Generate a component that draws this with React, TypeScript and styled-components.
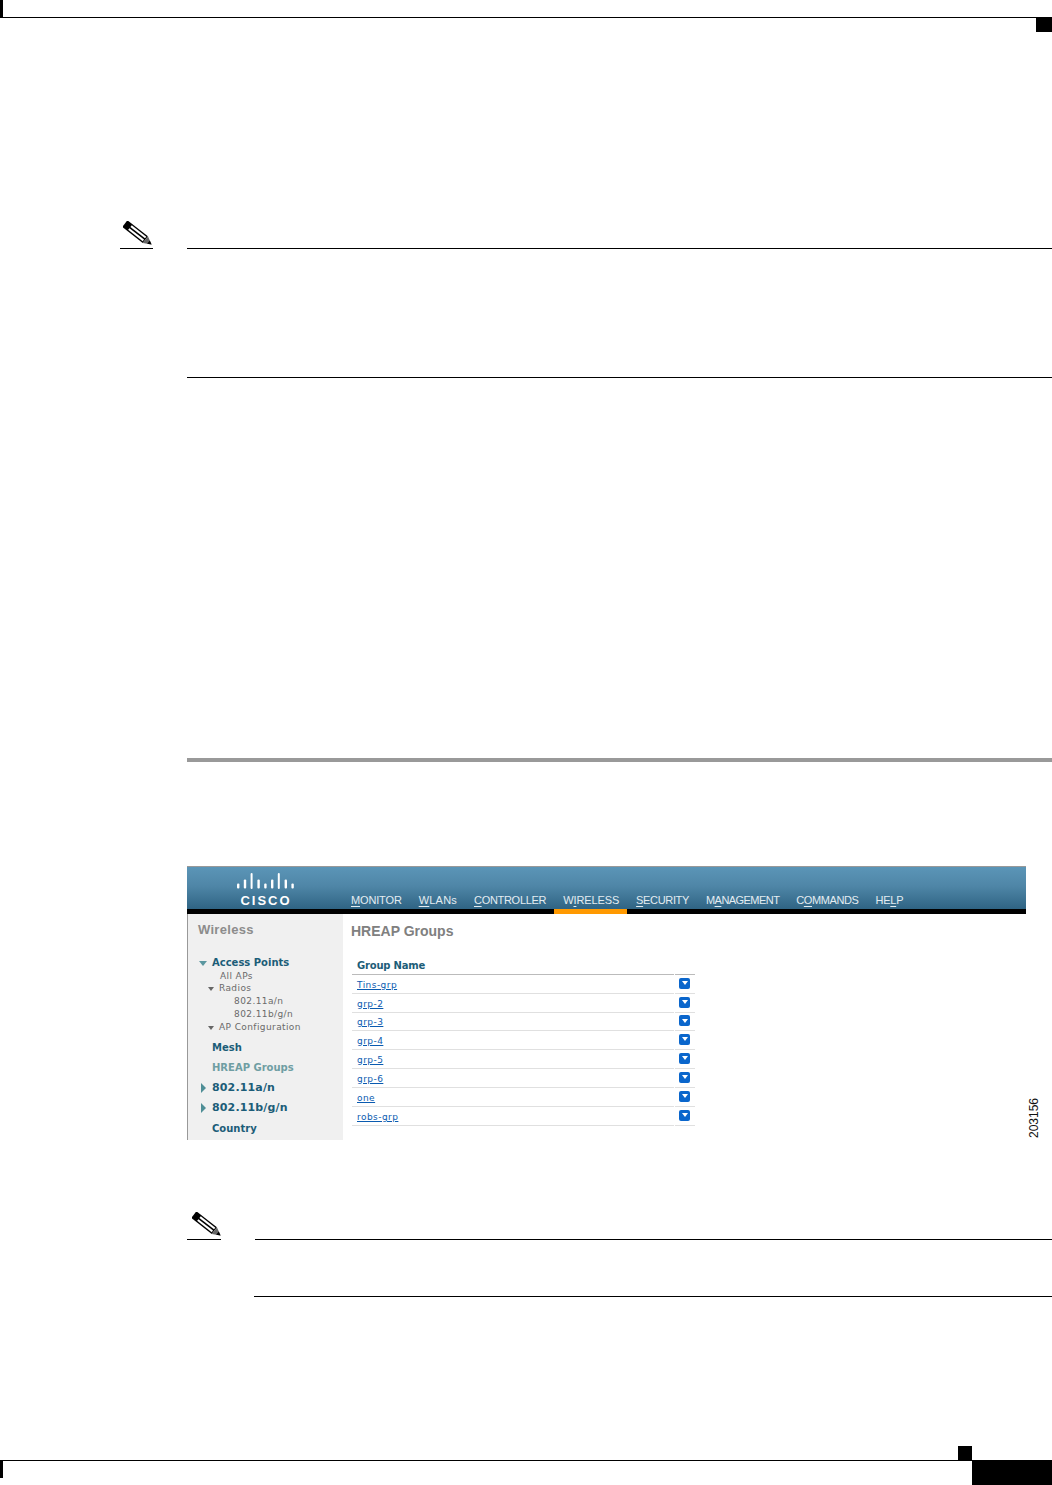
import React from "react";
import styled, { createGlobalStyle } from "styled-components";

const Global = createGlobalStyle`
  html, body { margin: 0; padding: 0; background: #fff; }
  body { font-family: "Liberation Sans", Arial, sans-serif; }
`;

const Page = styled.div`
  width: 1052px;
  height: 1485px;
  display: flex;
  flex-direction: column;
  overflow: hidden;
  background: #fff;
`;

const TopEdge = styled.header`
  display: flex;
  flex-direction: column;
`;
const TopTick = styled.div`
  width: 3px;
  height: 17px;
  background: #000;
`;
const TopRule = styled.div`
  height: 1px;
  background: #000;
`;
const CornerMark = styled.div`
  width: 16px;
  height: 14px;
  margin-left: auto;
  background: #000;
`;

const Note = styled.section<{ $left: number; $bodyLeft: number; $top: number; $body: number }>`
  margin: ${(p) => p.$top}px 0 0 ${(p) => p.$left}px;
  display: flex;
  flex-direction: column;
  & > div:last-child {
    height: ${(p) => p.$body - 1}px;
    margin-left: ${(p) => p.$bodyLeft}px;
  }
`;
const NoteHead = styled.div`
  display: flex;
  gap: 34px;
  height: 30px;
`;
const NoteIcon = styled.div<{ $width: number; $pad: number }>`
  width: ${(p) => p.$width}px;
  box-sizing: border-box;
  padding: 2px 0 0 ${(p) => p.$pad}px;
  border-bottom: 1px solid #000;
  svg { display: block; }
`;
const NoteLine = styled.div`
  flex: 1;
  border-bottom: 1px solid #000;
`;
const NoteBody = styled.div`
  border-bottom: 1px solid #000;
`;

const StepRule = styled.div`
  height: 4px;
  margin: 380px 0 0 187px;
  background: #999;
`;

const FigureRow = styled.div`
  display: flex;
  margin: 104px 0 0 187px;
  height: 274px;
`;
const Shot = styled.figure`
  width: 839px;
  margin: 0;
  display: flex;
  flex-direction: column;
  border-top: 1px solid #999;
  box-sizing: border-box;
`;
const FigureId = styled.div`
  align-self: flex-end;
  margin: 0 0 2px 3px;
  writing-mode: vertical-rl;
  transform: rotate(180deg);
  font-size: 12px;
  line-height: 11px;
  color: #111;
`;

const AppHeader = styled.div`
  height: 42px;
  display: flex;
  align-items: flex-end;
  background: linear-gradient(#5b95b7 0%, #4f86a7 45%, #2f6484 100%);
`;
const Logo = styled.div`
  width: 60px;
  margin: 0 56px 0 49px;
  height: 42px;
  display: flex;
  flex-direction: column;
  align-items: center;
  flex-shrink: 0;
  svg { display: block; margin-top: 6px; }
`;
const LogoWord = styled.span`
  margin-top: 5px;
  font-size: 13px;
  line-height: 12px;
  font-weight: 700;
  letter-spacing: 2px;
  color: #fff;
`;
const Nav = styled.nav`
  display: flex;
  gap: 17px;
  margin-left: -1px;
  padding-bottom: 2px;
`;
const NavItem = styled.span<{ $tight: number }>`
  font-size: 11px;
  line-height: 14px;
  letter-spacing: ${(p) => p.$tight}px;
  color: #e4edf2;
  white-space: nowrap;
  u { text-underline-offset: 2px; }
`;
const Band = styled.div`
  height: 5px;
  background: #000;
  display: flex;
`;
const ActiveTab = styled.div`
  width: 73px;
  margin-left: 367px;
  background: #f90;
`;
const AppBody = styled.div`
  flex: 1;
  display: flex;
  min-height: 0;
`;
const Sidebar = styled.aside`
  width: 155px;
  background: #f0f0f0;
  border-left: 1px solid #999;
  display: flex;
  flex-direction: column;
  padding-top: 6px;
`;
const SideTitle = styled.div`
  height: 20px;
  line-height: 20px;
  padding-left: 10px;
  margin-bottom: 16px;
  font-size: 13px;
  font-weight: 700;
  letter-spacing: 0.3px;
  color: #8c8c8c;
`;
const TreeRow = styled.div<{ $x: number; $top?: number }>`
  display: flex;
  align-items: center;
  padding-left: ${(p) => p.$x}px;
  margin-top: ${(p) => p.$top ?? 0}px;
  white-space: nowrap;
`;
const BoldLink = styled.span<{ $active?: boolean; $big?: boolean }>`
  font-family: "DejaVu Sans", sans-serif;
  font-weight: 700;
  font-size: ${(p) => (p.$big ? 11 : 10)}px;
  letter-spacing: ${(p) => (p.$big ? 0.15 : 0)}px;
  line-height: 14px;
  color: ${(p) => (p.$active ? "#6f9ea3" : "#1c5d78")};
`;
const SubLink = styled.span`
  font-family: "DejaVu Sans", sans-serif;
  font-size: 9px;
  letter-spacing: 0.4px;
  line-height: 13px;
  color: #6a6a6a;
`;
const TriDown = styled.span<{ $small?: boolean }>`
  width: 0;
  height: 0;
  border-left: ${(p) => (p.$small ? 3.5 : 4.5)}px solid transparent;
  border-right: ${(p) => (p.$small ? 3.5 : 4.5)}px solid transparent;
  border-top: ${(p) => (p.$small ? 4 : 5)}px solid ${(p) => (p.$small ? "#666" : "#5b97a0")};
  margin-right: 5px;
`;
const TriRight = styled.span`
  width: 0;
  height: 0;
  border-top: 5px solid transparent;
  border-bottom: 5px solid transparent;
  border-left: 5px solid #4f8e96;
  margin-right: 6px;
`;

const Main = styled.main`
  flex: 1;
  padding: 6px 0 0 8px;
`;
const MainTitle = styled.h1`
  margin: 0 0 17px;
  height: 22px;
  line-height: 22px;
  font-size: 14px;
  font-weight: 700;
  color: #808080;
`;
const GroupTable = styled.div`
  width: 343px;
  margin-left: 1px;
  display: grid;
  grid-template-columns: 322px 20px;
  column-gap: 1px;
`;
const HeadCell = styled.div`
  height: 15px;
  padding-left: 5px;
  border-bottom: 1px solid #bbb;
  font-family: "DejaVu Sans", sans-serif;
  font-size: 10px;
  font-weight: 700;
  letter-spacing: -0.2px;
  line-height: 14px;
  color: #1c5d78;
`;
const NameCell = styled.div<{ $h: number }>`
  height: ${(p) => p.$h - 1}px;
  padding-left: 5px;
  border-bottom: 1px solid #e0e0e0;
  display: flex;
  align-items: center;
`;
const GroupLink = styled.a`
  font-family: "DejaVu Sans", sans-serif;
  font-size: 9px;
  letter-spacing: 0.45px;
  color: #0a5bb0;
  text-decoration: underline;
  padding-top: 1px;
`;
const ActionCell = styled.div<{ $h: number }>`
  height: ${(p) => p.$h}px;
  box-sizing: border-box;
  padding: 0 1px 2px 0;
  border-bottom: 1px solid #e0e0e0;
  display: flex;
  align-items: center;
  justify-content: center;
`;
const ActionButton = styled.span`
  width: 11px;
  height: 11px;
  border-radius: 2px;
  background: #0a66cc;
  display: flex;
  align-items: center;
  justify-content: center;
  &::after {
    content: "";
    border-left: 3.5px solid transparent;
    border-right: 3.5px solid transparent;
    border-top: 4px solid #fff;
  }
`;

const Footer = styled.footer`
  margin-top: auto;
  display: flex;
  flex-direction: column;
`;
const FooterMark = styled.div`
  width: 14px;
  height: 14px;
  margin-left: 958px;
  background: #000;
`;
const FooterRow = styled.div`
  display: flex;
  height: 25px;
`;
const FooterLeft = styled.div`
  width: 972px;
  border-top: 1px solid #000;
  box-sizing: border-box;
`;
const FooterTick = styled.div`
  width: 3px;
  height: 17px;
  background: #000;
`;
const PageBox = styled.div`
  flex: 1;
  background: #000;
`;

const Pencil = () => (
  <svg width="30" height="25" viewBox="0 0 30 25" aria-hidden="true">
    <g transform="translate(3 3.5) rotate(38)">
      <rect x="-1.5" y="-4.2" width="26" height="8.4" fill="#000" />
      <rect x="5" y="-2.9" width="18.5" height="2.1" fill="#fff" />
      <rect x="5" y="0.8" width="18.5" height="2.1" fill="#fff" />
      <polygon points="24.5,-4.2 32.5,0 24.5,4.2" fill="#666" />
      <polygon points="28.5,-2.1 32.5,0 28.5,2.1" fill="#000" />
    </g>
  </svg>
);

const barHeights = [5, 9, 16, 9, 5, 9, 16, 9, 5];
const CiscoBars = () => (
  <svg width="60" height="17" viewBox="0 0 60 17" aria-hidden="true">
    {barHeights.map((h, i) => (
      <rect
        key={i}
        x={1 + i * 6.8}
        y={16 - h - (h === 16 ? 0 : 0.5)}
        width={h === 16 ? 2 : 2.4}
        height={h}
        rx="1"
        fill="#fff"
      />
    ))}
  </svg>
);

const navItems: [string, string, string, number][] = [
  ["", "M", "ONITOR", -0.15],
  ["", "W", "LANs", 0.2],
  ["", "C", "ONTROLLER", -0.3],
  ["W", "I", "RELESS", -0.12],
  ["", "S", "ECURITY", -0.35],
  ["M", "A", "NAGEMENT", -0.55],
  ["C", "O", "MMANDS", -0.4],
  ["HE", "L", "P", -0.25],
];

const groups: [string, number][] = [
  ["Tins-grp", 19],
  ["grp-2", 19],
  ["grp-3", 18],
  ["grp-4", 19],
  ["grp-5", 19],
  ["grp-6", 19],
  ["one", 19],
  ["robs-grp", 19],
];

export default function App() {
  return (
    <Page>
      <Global />
      <TopEdge>
        <TopTick />
        <TopRule />
        <CornerMark />
      </TopEdge>

      <Note $left={120} $bodyLeft={67} $top={187} $body={129}>
        <NoteHead>
          <NoteIcon $width={33} $pad={3}>
            <Pencil />
          </NoteIcon>
          <NoteLine />
        </NoteHead>
        <NoteBody />
      </Note>

      <StepRule />

      <FigureRow>
        <Shot>
          <AppHeader>
            <Logo>
              <CiscoBars />
              <LogoWord>CISCO</LogoWord>
            </Logo>
            <Nav>
              {navItems.map(([a, b, c, tight]) => (
                <NavItem key={a + b + c} $tight={tight}>
                  {a}
                  <u>{b}</u>
                  {c}
                </NavItem>
              ))}
            </Nav>
          </AppHeader>
          <Band>
            <ActiveTab />
          </Band>
          <AppBody>
            <Sidebar>
              <SideTitle>Wireless</SideTitle>
              <TreeRow $x={11}>
                <TriDown />
                <BoldLink>Access Points</BoldLink>
              </TreeRow>
              <TreeRow $x={32}>
                <SubLink>All APs</SubLink>
              </TreeRow>
              <TreeRow $x={20} $top={-1}>
                <TriDown $small />
                <SubLink>Radios</SubLink>
              </TreeRow>
              <TreeRow $x={46}>
                <SubLink>802.11a/n</SubLink>
              </TreeRow>
              <TreeRow $x={46}>
                <SubLink>802.11b/g/n</SubLink>
              </TreeRow>
              <TreeRow $x={20}>
                <TriDown $small />
                <SubLink>AP Configuration</SubLink>
              </TreeRow>
              <TreeRow $x={24} $top={7}>
                <BoldLink>Mesh</BoldLink>
              </TreeRow>
              <TreeRow $x={24} $top={6}>
                <BoldLink $active>HREAP Groups</BoldLink>
              </TreeRow>
              <TreeRow $x={13} $top={6}>
                <TriRight />
                <BoldLink $big>802.11a/n</BoldLink>
              </TreeRow>
              <TreeRow $x={13} $top={6}>
                <TriRight />
                <BoldLink $big>802.11b/g/n</BoldLink>
              </TreeRow>
              <TreeRow $x={24} $top={7}>
                <BoldLink>Country</BoldLink>
              </TreeRow>
            </Sidebar>
            <Main>
              <MainTitle>HREAP Groups</MainTitle>
              <GroupTable>
                <HeadCell>Group Name</HeadCell>
                <HeadCell />
                {groups.map(([name, h]) => (
                  <React.Fragment key={name}>
                    <NameCell $h={h}>
                      <GroupLink>{name}</GroupLink>
                    </NameCell>
                    <ActionCell $h={h}>
                      <ActionButton />
                    </ActionCell>
                  </React.Fragment>
                ))}
              </GroupTable>
            </Main>
          </AppBody>
        </Shot>
        <FigureId>203156</FigureId>
      </FigureRow>

      <Note $left={187} $bodyLeft={67} $top={70} $body={57}>
        <NoteHead>
          <NoteIcon $width={34} $pad={5}>
            <Pencil />
          </NoteIcon>
          <NoteLine />
        </NoteHead>
        <NoteBody />
      </Note>

      <Footer>
        <FooterMark />
        <FooterRow>
          <FooterLeft>
            <FooterTick />
          </FooterLeft>
          <PageBox />
        </FooterRow>
      </Footer>
    </Page>
  );
}
